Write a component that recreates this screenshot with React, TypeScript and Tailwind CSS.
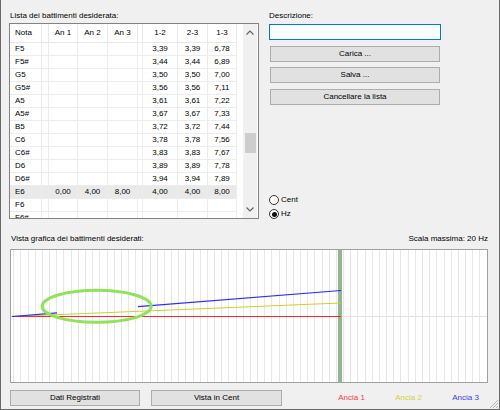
import React from 'react';

const FONT = { fontFamily: '"Liberation Sans", Arial, sans-serif' };

const ROWS: [string, string, string, string, string, string, string][] = [
  ['F5', '', '', '', '3,39', '3,39', '6,78'],
  ['F5#', '', '', '', '3,44', '3,44', '6,89'],
  ['G5', '', '', '', '3,50', '3,50', '7,00'],
  ['G5#', '', '', '', '3,56', '3,56', '7,11'],
  ['A5', '', '', '', '3,61', '3,61', '7,22'],
  ['A5#', '', '', '', '3,67', '3,67', '7,33'],
  ['B5', '', '', '', '3,72', '3,72', '7,44'],
  ['C6', '', '', '', '3,78', '3,78', '7,56'],
  ['C6#', '', '', '', '3,83', '3,83', '7,67'],
  ['D6', '', '', '', '3,89', '3,89', '7,78'],
  ['D6#', '', '', '', '3,94', '3,94', '7,89'],
  ['E6', '0,00', '4,00', '8,00', '4,00', '4,00', '8,00'],
  ['F6', '', '', '', '', '', ''],
  ['F6#', '', '', '', '', '', ''],
];

const GRID = 'grid grid-cols-[32px_7px_29px_30px_30px_5px_35px_30px_29px]';

function Row({ r, selected }: { r: string[]; selected?: boolean }) {
  const cell = 'border-r border-b border-[#ececec] flex items-center justify-center';
  return (
    <div className={`${GRID} h-[13px] ${selected ? 'bg-[#e9e9e9]' : ''}`}>
      <div className="border-r border-b border-[#ececec] flex items-center pl-[5px]">{r[0]}</div>
      <div className={cell} />
      <div className={cell}>{r[1]}</div>
      <div className={cell}>{r[2]}</div>
      <div className={cell}>{r[3]}</div>
      <div className={cell} />
      <div className={cell}>{r[4]}</div>
      <div className={cell}>{r[5]}</div>
      <div className={cell}>{r[6]}</div>
    </div>
  );
}

function Chevron({ down }: { down?: boolean }) {
  return (
    <svg width="8" height="5" viewBox="0 0 8 5">
      <polyline
        points={down ? '0.5,0.5 4,4 7.5,0.5' : '0.5,4.5 4,1 7.5,4.5'}
        fill="none"
        stroke="#606060"
        strokeWidth="1.1"
      />
    </svg>
  );
}

function Button({ label, className = '' }: { label: string; className?: string }) {
  return (
    <div className={`h-[16px] bg-[#e1e1e1] border border-[#adadad] flex items-center justify-center ${className}`}>
      {label}
    </div>
  );
}

function Radio({ label, checked }: { label: string; checked?: boolean }) {
  return (
    <div className="flex items-center gap-[2px] h-[14px]">
      <div className="w-[10px] h-[10px] rounded-full border border-[#333] bg-white flex items-center justify-center">
        {checked && <div className="w-[5px] h-[5px] rounded-full bg-[#111]" />}
      </div>
      <span>{label}</span>
    </div>
  );
}

function Graph() {
  const W = 476;
  const H = 132;
  const vlines: number[] = [];
  for (let k = 0; 2.3 + 7.17 * k < W; k++) vlines.push(Math.round(2.3 + 7.17 * k) + 0.5);
  const blueY = (x: number) => 66.5 - (26 * (x - 1)) / 329;
  return (
    <svg width={W} height={H} viewBox={`0 0 ${W} ${H}`} className="block">
      {vlines.map(x => (
        <line key={x} x1={x} y1={0} x2={x} y2={H} stroke="#e6e6e6" strokeWidth="1" />
      ))}
      <line x1={0} y1={66.5} x2={W} y2={66.5} stroke="#e2e2e2" strokeWidth="1" />
      <rect x={327} y={0} width={4} height={H} fill="#91b591" />
      {/* Ancia 2 */}
      <line x1={1} y1={66.5} x2={330} y2={53} stroke="#cfcf2a" strokeWidth="1.2" />
      {/* Ancia 1 */}
      <line x1={1} y1={66.5} x2={330} y2={66.5} stroke="#ff2a2a" strokeWidth="1" />
      {/* Ancia 3, with gap */}
      <line x1={1} y1={66.5} x2={46} y2={blueY(46)} stroke="#2a2aff" strokeWidth="1.2" />
      <line x1={127} y1={blueY(127)} x2={330} y2={40.5} stroke="#2a2aff" strokeWidth="1.2" />
      <ellipse cx={85.7} cy={56.3} rx={54.5} ry={16} fill="none" stroke="#8ee35a" strokeWidth="3" />
    </svg>
  );
}

export default function App() {
  return (
    <div
      className="relative w-[500px] h-[410px] bg-[#f0f0f0] border-l border-r border-b border-[#686868] text-[8px] leading-[10px] text-black overflow-hidden"
      style={FONT}
    >
      {/* top section */}
      <div className="flex gap-[10px] pl-[8px] pt-[11px]">
        {/* table column */}
        <div className="w-[250px] flex flex-col">
          <div className="pl-[1px] h-[10px]">Lista dei battimenti desiderata:</div>
          <div className="mt-[2px] h-[196px] border border-[#828282] bg-white flex overflow-hidden">
            <div className="w-[227px] flex flex-col overflow-hidden">
              <div className={`${GRID} h-[19px] shrink-0`}>
                <div className="border-r border-b border-[#e8e8e8] flex items-center pl-[5px]">Nota</div>
                <div className="border-r border-b border-[#e8e8e8]" />
                <div className="border-r border-b border-[#e8e8e8] flex items-center justify-center">An 1</div>
                <div className="border-r border-b border-[#e8e8e8] flex items-center justify-center">An 2</div>
                <div className="border-r border-b border-[#e8e8e8] flex items-center justify-center">An 3</div>
                <div className="border-r border-b border-[#e8e8e8]" />
                <div className="border-r border-b border-[#e8e8e8] flex items-center justify-center">1-2</div>
                <div className="border-r border-b border-[#e8e8e8] flex items-center justify-center">2-3</div>
                <div className="border-r border-b border-[#e8e8e8] flex items-center justify-center">1-3</div>
              </div>
              {ROWS.map(r => (
                <div key={r[0]} className="shrink-0">
                  <Row r={r} selected={r[0] === 'E6'} />
                </div>
              ))}
            </div>
            <div className="w-[6px]" />
            <div className="w-[14px] bg-[#f0f0f0] flex flex-col">
              <div className="h-[17px] flex items-center justify-center">
                <Chevron />
              </div>
              <div className="flex-1">
                <div className="mt-[92px] ml-[2px] mr-[1px] h-[20px] bg-[#cdcdcd]" />
              </div>
              <div className="h-[17px] flex items-center justify-center">
                <Chevron down />
              </div>
            </div>
          </div>
        </div>

        {/* right column */}
        <div className="w-[172px] flex flex-col">
          <div className="h-[10px]">Descrizione:</div>
          <div className="mt-[3px] h-[16px] border border-[#0078d7] bg-white" />
          <Button label="Carica ..." className="mt-[6px] mx-[1px]" />
          <Button label="Salva ..." className="mt-[5px] mx-[1px]" />
          <Button label="Cancellare la lista" className="mt-[6px] mx-[1px]" />
          <div className="mt-[88px] flex flex-col">
            <Radio label="Cent" />
            <Radio label="Hz" checked />
          </div>
        </div>
      </div>

      {/* graph section */}
      <div className="pl-[9px] pr-[11px] mt-[13px]">
        <div className="flex justify-between h-[10px] pl-[1px]">
          <span>Vista grafica dei battimenti desiderati:</span>
          <span>Scala massima: 20 Hz</span>
        </div>
        <div className="mt-[5px] h-[134px] border border-[#a0a0a0] bg-white overflow-hidden">
          <Graph />
        </div>
        <div className="mt-[7px] flex items-center">
          <Button label="Dati Registrati" className="w-[130px] shrink-0" />
          <Button label="Vista in Cent" className="w-[131px] ml-[11px] shrink-0" />
          <div className="ml-[41px] flex shrink-0">
            <span className="w-[57px] shrink-0 text-center text-[#ff3838]">Ancia 1</span>
            <span className="w-[57px] shrink-0 text-center text-[#d2d23a]">Ancia 2</span>
            <span className="w-[57px] shrink-0 text-center text-[#3c3cff]">Ancia 3</span>
          </div>
        </div>
      </div>

      {/* resize grip */}
      <svg className="absolute right-0 bottom-0" width="10" height="10" viewBox="0 0 10 10">
        <line x1="9" y1="1" x2="1" y2="9" stroke="#b5b5b5" strokeWidth="1" />
        <line x1="9" y1="4" x2="4" y2="9" stroke="#b5b5b5" strokeWidth="1" />
        <line x1="9" y1="7" x2="7" y2="9" stroke="#b5b5b5" strokeWidth="1" />
      </svg>
    </div>
  );
}
